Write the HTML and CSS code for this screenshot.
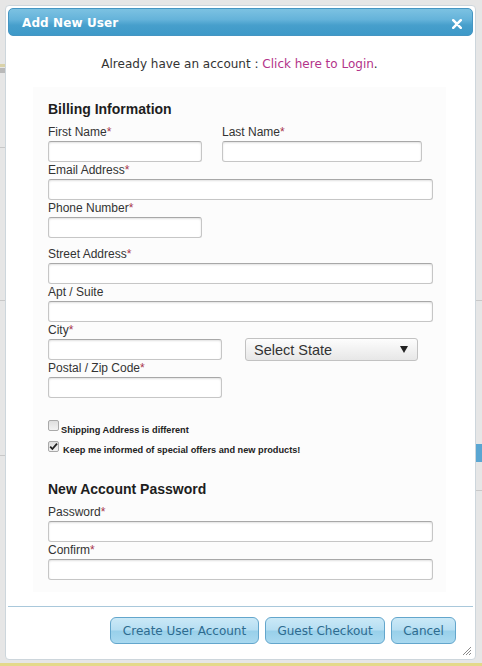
FILE: index.html
```html
<!DOCTYPE html>
<html lang="en">
<head>
<meta charset="utf-8">
<title>Add New User</title>
<link rel="stylesheet" href="styles.css">
</head>
<body>
<div class="dialog">
  <div class="titlebar">
    <span class="title">Add New User</span>
    <svg class="close" width="10" height="10" viewBox="0 0 10 10"><path d="M1.2 1.2 L8.8 8.8 M8.8 1.2 L1.2 8.8" stroke="#fff" stroke-width="2.5" stroke-linecap="round"/></svg>
  </div>
  <div class="content">
    <p class="login-line">Already have an account : <a class="login-link" href="#">Click here to Login</a>.</p>
    <div class="panel">
      <h3 class="section-title">Billing Information</h3>
      <div class="row">
        <div class="field"><label class="lbl">First Name<span class="req">*</span></label><input class="inp w154" type="text"></div>
        <div class="field"><label class="lbl">Last Name<span class="req">*</span></label><input class="inp w200" type="text"></div>
      </div>
      <label class="lbl">Email Address<span class="req">*</span></label>
      <input class="inp w385" type="text">
      <label class="lbl">Phone Number<span class="req">*</span></label>
      <input class="inp w154 after-gap" type="text">
      <label class="lbl">Street Address<span class="req">*</span></label>
      <input class="inp w385" type="text">
      <label class="lbl">Apt / Suite</label>
      <input class="inp w385" type="text">
      <label class="lbl">City<span class="req">*</span></label>
      <div class="city-row">
        <input class="inp w174" type="text">
        <div class="select"><span>Select State</span><svg width="8" height="7" viewBox="0 0 8 7"><path d="M0 0 H8 L4 7 Z" fill="#222"/></svg></div>
      </div>
      <label class="lbl">Postal / Zip Code<span class="req">*</span></label>
      <input class="inp w174" type="text">
      <div class="check-row first">
        <span class="cb"></span><span class="cb-text">Shipping Address is different</span>
      </div>
      <div class="check-row second">
        <span class="cb"><svg width="11" height="11" viewBox="0 0 11 11"><path d="M2.2 5.6 L4.4 8 L9 2.6" stroke="#222" stroke-width="1.8" fill="none"/></svg></span><span class="cb-text wide">Keep me informed of special offers and new products!</span>
      </div>
      <h3 class="section-title pw">New Account Password</h3>
      <label class="lbl">Password<span class="req">*</span></label>
      <input class="inp w385" type="password">
      <label class="lbl">Confirm<span class="req">*</span></label>
      <input class="inp w385" type="password">
    </div>
  </div>
  <div class="footer">
    <button class="btn b149" type="button">Create User Account</button>
    <button class="btn b120" type="button">Guest Checkout</button>
    <button class="btn b65" type="button">Cancel</button>
  </div>
  <svg class="grip" width="11" height="11" viewBox="0 0 11 11"><path d="M10 2 L2 10 M10 5 L5 10 M10 8 L8 10" stroke="#8a8a8a" stroke-width="1"/></svg>
</div>
</body>
</html>
```
FILE: styles.css
```css
html, body {
  margin: 0;
  padding: 0;
}
body {
  width: 482px;
  height: 666px;
  overflow: hidden;
  background-color: #e6e6e6;
  background-image:
    linear-gradient(#d9d2a9, #d9d2a9),
    linear-gradient(#b9b9b9, #b9b9b9),
    linear-gradient(#c8c8c8, #c8c8c8),
    linear-gradient(#c8c8c8, #c8c8c8),
    linear-gradient(#c8c8c8, #c8c8c8),
    linear-gradient(#c8c8c8, #c8c8c8),
    linear-gradient(#c8c8c8, #c8c8c8),
    linear-gradient(#5aa6d2, #5aa6d2),
    linear-gradient(#e4d98a, #e4d98a);
  background-repeat: no-repeat;
  background-size:
    6px 3px,
    6px 5px,
    6px 1px,
    6px 1px,
    6px 1px,
    6px 1px,
    6px 1px,
    6px 18px,
    482px 3px;
  background-position:
    0 64px,
    0 68px,
    0 147px,
    0 300px,
    0 455px,
    476px 300px,
    476px 490px,
    476px 444px,
    0 663px;
  font-family: "Liberation Sans", Arial, sans-serif;
}
.dialog {
  position: relative;
  box-sizing: border-box;
  margin: 5px 0 0 5px;
  width: 471px;
  height: 655px;
  padding: 2px;
  background: #ffffff;
  border: 1px solid #cdd6dc;
  border-radius: 4px;
  display: flex;
  flex-direction: column;
}
.titlebar {
  box-sizing: border-box;
  height: 28px;
  display: flex;
  align-items: center;
  justify-content: space-between;
  padding: 0 10px 0 13px;
  border: 1px solid #4595c2;
  border-radius: 5px;
  background: linear-gradient(#7cc2e2 0%, #65b3da 40%, #479fcc 62%, #3d99c8 100%);
}
.title {
  font-family: "DejaVu Sans", Verdana, sans-serif;
  font-weight: bold;
  font-size: 12px;
  color: #ffffff;
  letter-spacing: 0.1px;
  margin-top: 1px;
}
.close {
  display: block;
  margin-top: 3px;
}
.content {
  padding: 20px 27px 0 25px;
}
.login-line {
  margin: 0 0 14px;
  text-align: center;
  font-family: "DejaVu Sans", Verdana, sans-serif;
  font-size: 12px;
  line-height: 17px;
  color: #333333;
}
.login-link {
  color: #b3338a;
  text-decoration: none;
}
.panel {
  background: #fcfcfc;
  padding: 14px 15px 12px;
  margin-bottom: 14px;
}
.section-title {
  margin: 0 0 6px;
  font-size: 14px;
  line-height: 17px;
  font-weight: bold;
  color: #1e1e1e;
}
.section-title.pw {
  margin-top: 24px;
}
.row {
  display: flex;
  gap: 20px;
}
.field {
  display: flex;
  flex-direction: column;
}
.lbl {
  display: block;
  font-size: 12px;
  line-height: 17px;
  color: #333333;
}
.req {
  color: #a8344c;
}
.inp {
  display: block;
  box-sizing: border-box;
  height: 21px;
  margin: 0;
  padding: 0 4px;
  border: 1px solid #c6c6c6;
  border-top-color: #a8a8a8;
  border-radius: 3px;
  background: #ffffff;
  box-shadow: inset 0 1px 2px rgba(0, 0, 0, 0.12);
  font: 12px "Liberation Sans", Arial, sans-serif;
}
.w154 { width: 154px; }
.w174 { width: 174px; }
.w200 { width: 200px; }
.w385 { width: 385px; }
.after-gap { margin-bottom: 8px; }
.city-row {
  display: flex;
  align-items: center;
  height: 21px;
}
.select {
  box-sizing: border-box;
  width: 173px;
  height: 23px;
  margin-left: 23px;
  padding: 0 9px 0 8px;
  display: flex;
  align-items: center;
  justify-content: space-between;
  border: 1px solid #c2c2c2;
  border-radius: 3px;
  background: linear-gradient(#fdfdfd, #e7e7e7);
  font-size: 14.5px;
  color: #333333;
}
.check-row {
  display: flex;
  align-items: flex-start;
}
.check-row.first {
  margin-top: 22px;
}
.check-row.second {
  margin-top: 4px;
}
.cb {
  box-sizing: border-box;
  width: 11px;
  height: 11px;
  border: 1px solid #a9a9a9;
  border-radius: 2px;
  background: linear-gradient(#dedede, #f2f2f2);
  display: flex;
  align-items: center;
  justify-content: center;
}
.cb svg {
  display: block;
  margin: -1px;
}
.cb-text {
  margin: 4px 0 0 2px;
  font-weight: bold;
  font-size: 9.2px;
  line-height: 13px;
  color: #222222;
}
.cb-text.wide {
  margin: 3px 0 0 4px;
}
.footer {
  border-top: 1px solid #a9c8db;
  padding: 10px 17px 0 0;
  display: flex;
  justify-content: flex-end;
  gap: 6px;
}
.btn {
  box-sizing: border-box;
  height: 27px;
  margin: 0;
  padding: 0;
  border: 1px solid #63a6cc;
  border-radius: 6px;
  background: linear-gradient(#cbe9f7 0%, #b6def2 48%, #98d0ea 52%, #a9d9f0 100%);
  font-family: "DejaVu Sans", Verdana, sans-serif;
  font-size: 12px;
  color: #2d6b8f;
}
.b149 { width: 149px; }
.b120 { width: 120px; }
.b65 { width: 65px; }
.grip {
  position: absolute;
  right: 3px;
  bottom: 3px;
}
```
